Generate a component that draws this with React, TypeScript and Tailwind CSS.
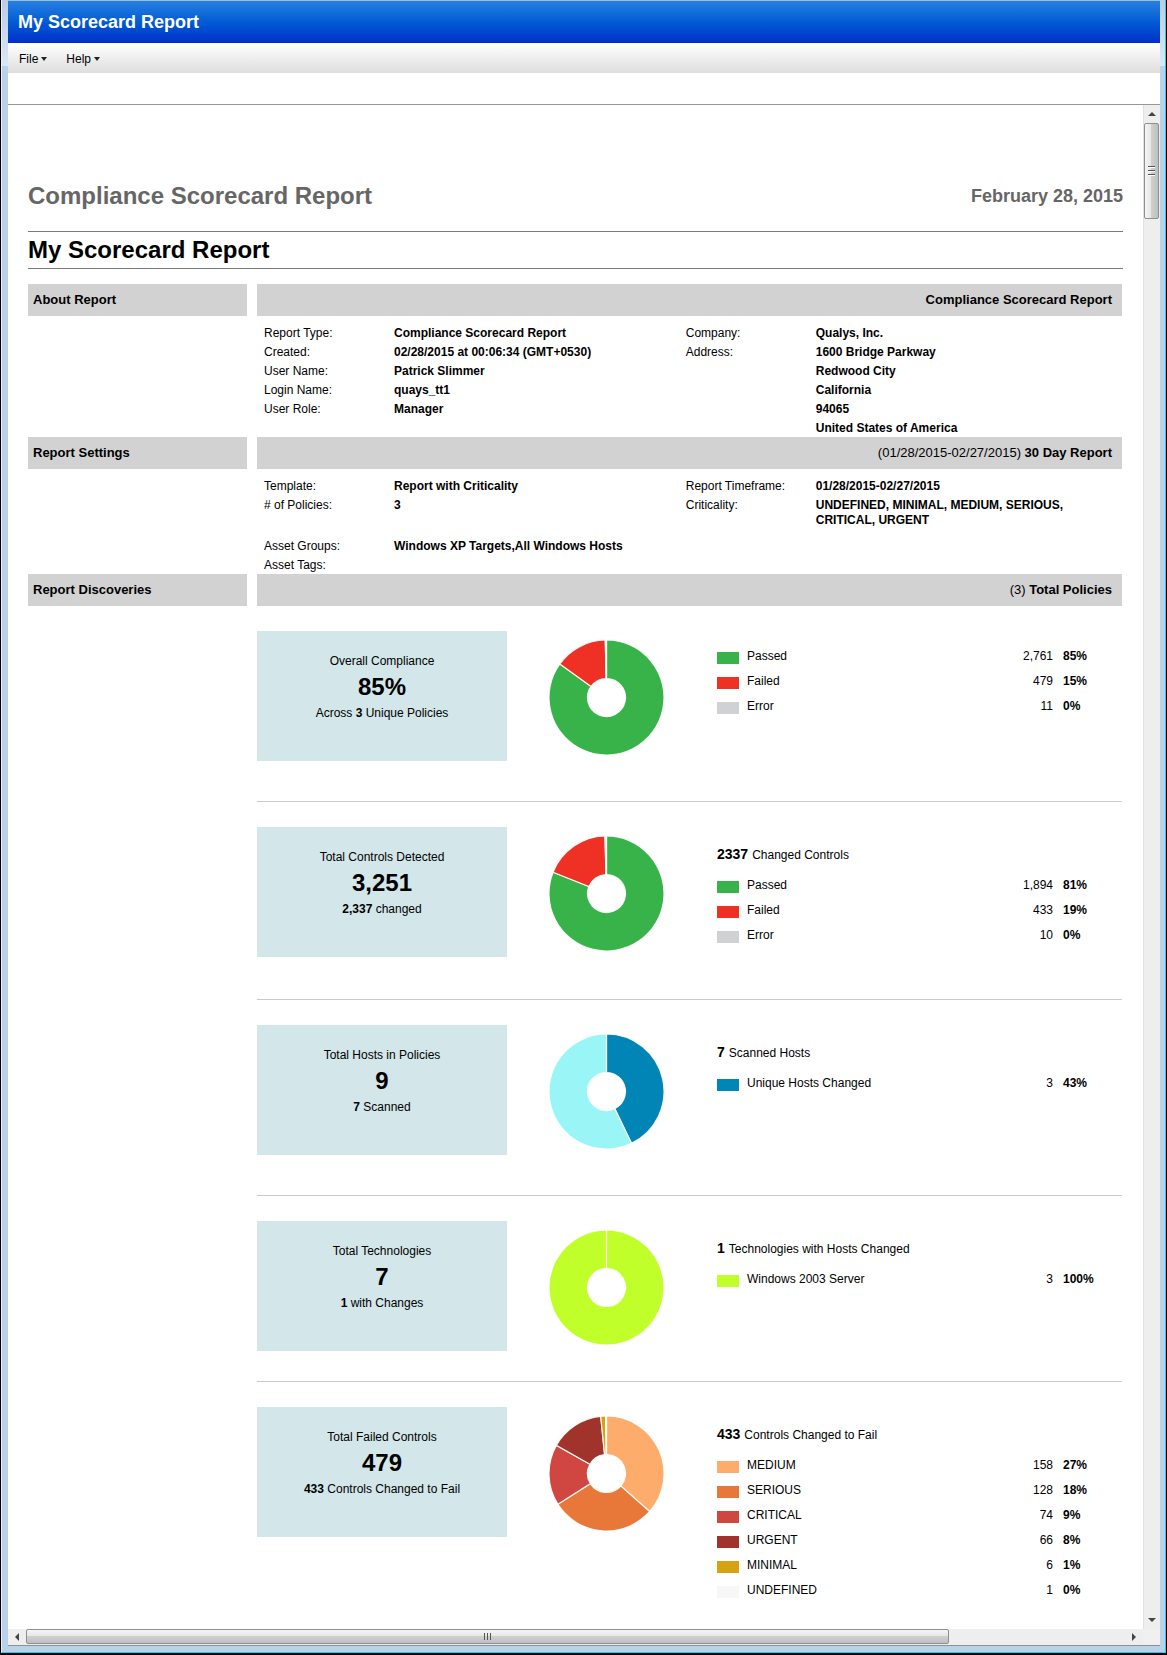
import React from "react";

type Slice = { label: string; count: number; color: string; value?: string; percent?: string };
type Discovery = {
  title: string;
  figure: string;
  note: React.ReactNode;
  heading?: { count: string; text: string };
  slices: Slice[];
  spacing: string;
};

const GREEN = "#37b34a";
const RED = "#ee3124";
const GREY = "#d0d1d3";

const discoveries: Discovery[] = [
  {
    title: "Overall Compliance",
    figure: "85%",
    note: <>Across <b>3</b> Unique Policies</>,
    slices: [
      { label: "Passed", count: 2761, color: GREEN, value: "2,761", percent: "85%" },
      { label: "Failed", count: 479, color: RED, value: "479", percent: "15%" },
      { label: "Error", count: 11, color: GREY, value: "11", percent: "0%" },
    ],
    spacing: "pb-10 border-b",
  },
  {
    title: "Total Controls Detected",
    figure: "3,251",
    note: <><b>2,337</b> changed</>,
    heading: { count: "2337", text: "Changed Controls" },
    slices: [
      { label: "Passed", count: 1894, color: GREEN, value: "1,894", percent: "81%" },
      { label: "Failed", count: 433, color: RED, value: "433", percent: "19%" },
      { label: "Error", count: 10, color: GREY, value: "10", percent: "0%" },
    ],
    spacing: "pb-[42px] border-b",
  },
  {
    title: "Total Hosts in Policies",
    figure: "9",
    note: <><b>7</b> Scanned</>,
    heading: { count: "7", text: "Scanned Hosts" },
    slices: [
      { label: "Unique Hosts Changed", count: 3, color: "#0085b6", value: "3", percent: "43%" },
      { label: "", count: 4, color: "#9af6f6" },
    ],
    spacing: "pb-10 border-b",
  },
  {
    title: "Total Technologies",
    figure: "7",
    note: <><b>1</b> with Changes</>,
    heading: { count: "1", text: "Technologies with Hosts Changed" },
    slices: [{ label: "Windows 2003 Server", count: 3, color: "#c1ff2b", value: "3", percent: "100%" }],
    spacing: "pb-[30px] border-b",
  },
  {
    title: "Total Failed Controls",
    figure: "479",
    note: <><b>433</b> Controls Changed to Fail</>,
    heading: { count: "433", text: "Controls Changed to Fail" },
    slices: [
      { label: "MEDIUM", count: 158, color: "#fdac6b", value: "158", percent: "27%" },
      { label: "SERIOUS", count: 128, color: "#e87839", value: "128", percent: "18%" },
      { label: "CRITICAL", count: 74, color: "#d04641", value: "74", percent: "9%" },
      { label: "URGENT", count: 66, color: "#a0342c", value: "66", percent: "8%" },
      { label: "MINIMAL", count: 6, color: "#d5a311", value: "6", percent: "1%" },
      { label: "UNDEFINED", count: 1, color: "#f7f7f7", value: "1", percent: "0%" },
    ],
    spacing: "",
  },
];

function Donut({ slices, label }: { slices: Slice[]; label: string }) {
  const total = slices.reduce((sum, s) => sum + s.count, 0);
  const point = (turn: number, r: number) =>
    `${57.5 + r * Math.sin(turn * 2 * Math.PI)} ${57.5 - r * Math.cos(turn * 2 * Math.PI)}`;
  let start = 0;
  const parts = slices.map((s) => {
    const from = start;
    start += s.count / total;
    return { color: s.color, from, to: Math.min(start, from + 0.99999) };
  });
  return (
    <svg width="115" height="115" viewBox="0 0 115 115" role="img" aria-label={label} className="shrink-0">
      {parts.map((p, i) => {
        const large = p.to - p.from > 0.5 ? 1 : 0;
        return (
          <path
            key={i}
            fill={p.color}
            stroke="#fff"
            strokeWidth="1.2"
            strokeOpacity="0.9"
            d={`M${point(p.from, 57.5)} A57.5 57.5 0 ${large} 1 ${point(p.to, 57.5)} L${point(p.to, 19)} A19 19 0 ${large} 0 ${point(p.from, 19)} Z`}
          />
        );
      })}
    </svg>
  );
}

function DiscoveryRow({ d }: { d: Discovery }) {
  return (
    <section className={`flex items-start border-[#cacccc] pt-[25px] ${d.spacing}`}>
      <div className="h-[130px] w-[250px] shrink-0 bg-[#d3e6e9] pt-5 text-center">
        <h3 className="leading-5">{d.title}</h3>
        <p className="text-2xl leading-8 font-bold">{d.figure}</p>
        <p className="leading-5">{d.note}</p>
      </div>
      <div className="mt-[9px] ml-[42px]">
        <Donut slices={d.slices} label={d.title} />
      </div>
      <div className="ml-[53px] flex-1 pt-[13px]">
        {d.heading && (
          <h4 className="mb-[5px] flex h-7 items-baseline gap-1 leading-7">
            <b className="text-sm leading-7">{d.heading.count}</b> {d.heading.text}
          </h4>
        )}
        <table className="w-full table-fixed">
          <colgroup>
            <col className="w-[30px]" />
            <col />
            <col className="w-20" />
            <col className="w-[69px]" />
          </colgroup>
          <tbody>
            {d.slices.filter((s) => s.label).map((s) => (
              <tr key={s.label} className="h-[25px] leading-[25px]">
                <td className="align-top">
                  <span className="mt-2 block h-3 w-[22px]" style={{ backgroundColor: s.color }} />
                </td>
                <th scope="row" className="text-left font-normal">{s.label}</th>
                <td className="text-right">{s.value}</td>
                <td className="pl-2.5 font-bold">{s.percent}</td>
              </tr>
            ))}
          </tbody>
        </table>
      </div>
    </section>
  );
}

function Band({ title, children }: { title: string; children: React.ReactNode }) {
  return (
    <div className="mr-px flex gap-2.5 text-[13px] leading-8">
      <h2 className="w-[219px] shrink-0 bg-[#d2d2d2] pl-[5px] font-bold">{title}</h2>
      <div className="flex-1 bg-[#d2d2d2] pr-2.5 text-right">{children}</div>
    </div>
  );
}

type Fact = [string, string, string, string];

function Facts({ rows }: { rows: Fact[] }) {
  return (
    <div className="mr-px pt-[7px] pl-[236px]">
      <table className="w-full table-fixed">
        <colgroup>
          <col className="w-[130px]" />
          <col className="w-[34%]" />
          <col className="w-[130px]" />
          <col />
        </colgroup>
        <tbody className="leading-[15px]">
          {rows.map(([a, b, c, d], i) => (
            <tr key={i} className={d.includes("CRITICAL") ? "h-[41px] align-top" : "h-[19px] align-top"}>
              <th scope="row" className="pt-[3px] text-left font-normal">{a}</th>
              <td className="pt-[3px] font-bold">{b}</td>
              <th scope="row" className="pt-[3px] text-left font-normal">{c}</th>
              <td className="pt-[3px] font-bold"><span className="block max-w-64">{d}</span></td>
            </tr>
          ))}
        </tbody>
      </table>
    </div>
  );
}

const about: Fact[] = [
  ["Report Type:", "Compliance Scorecard Report", "Company:", "Qualys, Inc."],
  ["Created:", "02/28/2015 at 00:06:34 (GMT+0530)", "Address:", "1600 Bridge Parkway"],
  ["User Name:", "Patrick Slimmer", "", "Redwood City"],
  ["Login Name:", "quays_tt1", "", "California"],
  ["User Role:", "Manager", "", "94065"],
  ["", "", "", "United States of America"],
];

const settings: Fact[] = [
  ["Template:", "Report with Criticality", "Report Timeframe:", "01/28/2015-02/27/2015"],
  ["# of Policies:", "3", "Criticality:", "UNDEFINED, MINIMAL, MEDIUM, SERIOUS, CRITICAL, URGENT"],
  ["Asset Groups:", "Windows XP Targets,All Windows Hosts", "", ""],
  ["Asset Tags:", "", "", ""],
];

function MenuButton({ label }: { label: string }) {
  return (
    <button type="button" className="flex items-center gap-[3px]">
      {label}
      <svg width="6" height="4" viewBox="0 0 6 4" aria-hidden="true">
        <path d="M0 0H6L3 4Z" fill="#222" />
      </svg>
    </button>
  );
}

function Arrow({ label, d, box }: { label: string; d: string; box: string }) {
  return (
    <button type="button" aria-label={label} className={`flex shrink-0 items-center justify-center ${box}`}>
      <svg width="8" height="8" viewBox="0 0 8 8" aria-hidden="true">
        <path d={d} fill="#444" />
      </svg>
    </button>
  );
}

export default function App() {
  return (
    <div className="flex min-h-screen flex-col border-x border-b-2 border-black bg-[#b9d1ea] font-['Liberation_Sans',Arial,sans-serif] text-xs text-black">
      <div className="flex flex-1 flex-col border-r border-b border-l border-r-[#22cdee] border-b-[#22cdee] border-l-[#e6f0fa] bg-[linear-gradient(#b9cde6,#dbe7f6)] bg-[length:100%_66px] bg-no-repeat pr-[5px] pb-1.5 pl-1.5">
        <div className="flex flex-1 flex-col border-t border-b border-t-[#a0bcd0] border-b-[#8e8f8f] bg-white">
          <header className="bg-linear-to-b from-[#2680e0] to-[#002dc8] px-2.5">
            <h1 className="text-lg leading-[42px] font-bold text-white">My Scorecard Report</h1>
          </header>
          <nav className="flex h-[30px] items-center gap-[19px] bg-linear-to-b from-white to-[#dedede] px-[11px] pt-0.5">
            <MenuButton label="File" />
            <MenuButton label="Help" />
          </nav>
          <div className="h-8 border-b border-[#979797]" />

          <div className="flex flex-1">
            <main className="min-w-0 flex-1 px-5 pt-[71px]">
              <div className="flex items-center justify-between font-bold text-[#666]">
                <p className="text-2xl leading-10">Compliance Scorecard Report</p>
                <p className="text-lg leading-10">February 28, 2015</p>
              </div>
              <h2 className="mt-[15px] mb-[15px] border-y border-[#7a7a7a] text-2xl leading-9 font-bold">
                My Scorecard Report
              </h2>

              <Band title="About Report"><b>Compliance Scorecard Report</b></Band>
              <Facts rows={about} />
              <Band title="Report Settings">(01/28/2015-02/27/2015) <b>30 Day Report</b></Band>
              <Facts rows={settings} />
              <Band title="Report Discoveries">(3) <b>Total Policies</b></Band>
              <div className="mr-px ml-[229px]">
                {discoveries.map((d) => <DiscoveryRow key={d.title} d={d} />)}
              </div>
            </main>

            <div className="flex w-[17px] shrink-0 flex-col border-l border-[#e2e2e2] bg-[#eeeeee]">
              <Arrow label="Scroll up" box="h-[18px]" d="M0 6L4 2L8 6Z" />
              <div className="flex-1">
                <div className="mr-px flex h-24 flex-col items-center justify-center gap-0.5 rounded-xs border border-[#8e8e8e] bg-[linear-gradient(to_right,#f5f5f5,#e6e6e6_45%,#cfcfd1_50%,#bebfc1)]">
                  <i className="h-0.5 w-[7px] border-b border-white bg-[#555]" />
                  <i className="h-0.5 w-[7px] border-b border-white bg-[#555]" />
                  <i className="h-0.5 w-[7px] border-b border-white bg-[#555]" />
                </div>
              </div>
              <Arrow label="Scroll down" box="h-[18px]" d="M0 2H8L4 6Z" />
            </div>
          </div>

          <div className="flex h-4 bg-[#eeeeee]">
            <Arrow label="Scroll left" box="w-[18px]" d="M6 0V8L2 4Z" />
            <div className="flex-1">
              <div className="flex h-[15px] w-[84%] items-center justify-center gap-0.5 rounded-xs border border-[#8e8e8e] bg-[linear-gradient(#f5f5f5,#e6e6e6_45%,#cfcfd1_50%,#bebfc1)]">
                <i className="h-[7px] w-px bg-[#555]" />
                <i className="h-[7px] w-px bg-[#555]" />
                <i className="h-[7px] w-px bg-[#555]" />
              </div>
            </div>
            <Arrow label="Scroll right" box="w-[18px]" d="M2 0V8L6 4Z" />
            <div className="w-[17px] bg-[#f0f0f0]" />
          </div>
        </div>
      </div>
    </div>
  );
}
